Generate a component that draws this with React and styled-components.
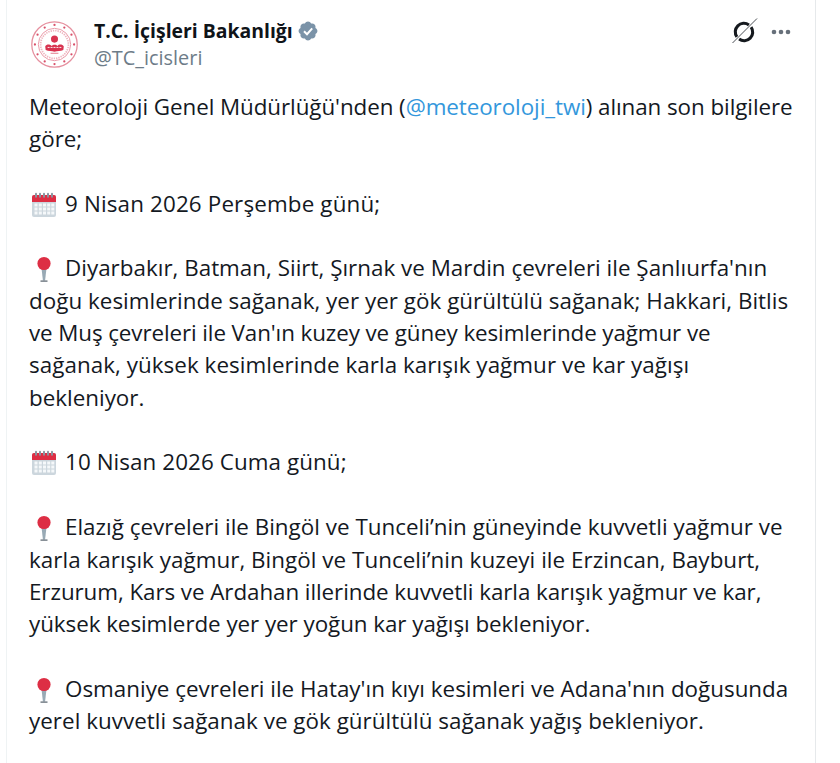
import React from 'react';
import styled, { createGlobalStyle } from 'styled-components';

const Global = createGlobalStyle`
  html, body { margin: 0; padding: 0; background: #fff; }
  body { font-family: "Open Sans", "Noto Sans", "Liberation Sans", sans-serif; color: #0f1419; }
`;

const Page = styled.div`
  width: 840px;
  height: 763px;
  overflow: hidden;
  background: #fff;
  padding-left: 6px;
  box-sizing: border-box;
`;

const Card = styled.article`
  width: 810px;
  height: 763px;
  box-sizing: border-box;
  border-left: 1px solid #eff3f4;
  border-right: 1px solid #e6e9eb;
  padding: 21px 0 0 24px;
`;

const Header = styled.header`
  display: flex;
  align-items: flex-start;
  height: 48px;
  padding-right: 24px;
`;

const Avatar = styled.svg`
  width: 47px;
  height: 47px;
  flex: none;
  margin-right: 16px;
`;

const Identity = styled.div`
  flex: 1;
  display: flex;
  flex-direction: column;
`;

const NameRow = styled.div`
  display: flex;
  align-items: center;
  gap: 4px;
  height: 20px;
`;

const Name = styled.span`
  font-size: 19.4px;
  font-weight: 700;
  line-height: 20px;
  white-space: nowrap;
`;

const Handle = styled.span`
  margin-top: 5px;
  font-size: 19.9px;
  line-height: 24px;
  color: #6d7c88;
  white-space: nowrap;
`;

const Actions = styled.div`
  display: flex;
  align-items: center;
  gap: 13px;
  height: 22px;
`;

const Body = styled.div`
  margin: 21.5px 0 0 -2px;
  font-size: 22.4px;
  line-height: 32.37px;
  color: #14191f;
`;

const Line = styled.div`
  height: 32.37px;
  white-space: nowrap;
  letter-spacing: ${(p) => p.$spacing ?? 0}px;
`;

const Mention = styled.span`
  color: #3397dc;
`;

const Emoji = styled.svg`
  width: 26px;
  height: 26px;
  vertical-align: -6px;
  margin: 0 8px 0 2px;
`;

const Verified = () => (
  <svg width="22" height="22" viewBox="0 0 22 22" aria-hidden="true">
    <path fill="#7b93a8" d="M20.4 11c0-1.3-.8-2.5-2-3 .4-1.2.1-2.6-.8-3.6-.9-.9-2.3-1.2-3.5-.8-.5-1.2-1.7-2-3.1-2s-2.5.8-3.1 2c-1.2-.4-2.6-.1-3.5.8-.9 1-1.2 2.4-.8 3.6-1.2.5-2 1.7-2 3s.8 2.5 2 3.1c-.4 1.2-.1 2.6.8 3.5.9.9 2.3 1.2 3.5.8.6 1.2 1.7 2 3.1 2s2.6-.8 3.1-2c1.2.4 2.6.1 3.5-.8.9-.9 1.2-2.3.8-3.5 1.2-.6 2-1.8 2-3.1z" />
    <path fill="none" stroke="#fff" strokeWidth="2" d="M7 11.2l3 3 5.2-5.8" />
  </svg>
);

const GrokMark = () => (
  <svg width="28" height="28" viewBox="0 0 28 28" aria-hidden="true">
    <path d="M18.9 6.9A8.6 8.6 0 0 0 6.9 18.9" fill="none" stroke="#15191e" strokeWidth="3.1" />
    <path d="M21.1 9.1A8.6 8.6 0 0 1 9.1 21.1" fill="none" stroke="#15191e" strokeWidth="3.1" />
    <path d="M2.5 25 L27 0.5" stroke="#4a4f55" strokeWidth="1" />
  </svg>
);

const MoreDots = () => (
  <svg width="20" height="6" viewBox="0 0 20 6" aria-hidden="true">
    <circle cx="3" cy="3" r="2.3" fill="#67707a" />
    <circle cx="10" cy="3" r="2.3" fill="#67707a" />
    <circle cx="17" cy="3" r="2.3" fill="#67707a" />
  </svg>
);

const Emblem = () => {
  const dots = Array.from({ length: 12 }, (_, i) => {
    const a = (i / 12) * Math.PI * 2;
    return [24 + 20 * Math.cos(a), 24 + 20 * Math.sin(a)];
  });
  return (
    <Avatar viewBox="0 0 48 48" aria-hidden="true">
      <circle cx="24" cy="24" r="23.2" fill="#fff" stroke="#e6909f" strokeWidth="1.3" />
      <circle cx="24" cy="24" r="16.5" fill="none" stroke="#e99aa8" strokeWidth="1" />
      <circle cx="24" cy="24" r="14.2" fill="none" stroke="#efb6c0" strokeWidth="1.8" strokeDasharray="1.4 1" />
      {dots.map(([x, y], i) => (
        <circle key={i} cx={x} cy={y} r="1.15" fill="#d9506a" />
      ))}
      <circle cx="24" cy="18.5" r="3.6" fill="#d8324f" />
      <path d="M14.5 26 C16 23 20 24 21 25.5 C22.5 23.8 26 23.8 27 25.5 C28.5 23.5 32 23.5 33.5 26 L33 29.5 C30 31 27 30 24 31.5 C21 30 18 31 15 29.5 Z" fill="#d8324f" />
      <path d="M17 27 h14" stroke="#fff" strokeWidth="0.9" strokeDasharray="2 1" />
      <path d="M20 33 h8" stroke="#e8909f" strokeWidth="1.2" />
    </Avatar>
  );
};

const Calendar = () => (
  <Emoji viewBox="0 0 26 26" aria-hidden="true">
    <rect x="1" y="3" width="24" height="22" rx="2" fill="#ccd6dd" />
    <path d="M1 10V5a2 2 0 0 1 2-2h20a2 2 0 0 1 2 2v5z" fill="#dd2e44" />
    {[4, 8, 12, 16, 20].map((x) => (
      <rect key={x} x={x} y="0.8" width="2" height="5" rx="1" fill="#8a95a0" />
    ))}
    {[11.5, 15.5, 19.5].map((y) =>
      [3.5, 7.8, 12, 16.2, 20.3].map((x) => (
        <rect key={`${x}-${y}`} x={x} y={y} width="3" height="3" fill="#f5f8fa" />
      ))
    )}
  </Emoji>
);

const Pin = () => (
  <Emoji viewBox="0 0 26 26" aria-hidden="true">
    <path d="M10.5 12h5l-1.4 12.5h-2.2z" fill="#99aab5" />
    <path d="M9.5 24.5h7v1.2h-7z" fill="#55606a" />
    <circle cx="13" cy="7.5" r="6.6" fill="#dd2e44" />
  </Emoji>
);

export default function App() {
  return (
    <>
      <Global />
      <Page>
        <Card>
          <Header>
            <Emblem />
            <Identity>
              <NameRow>
                <Name>T.C. İçişleri Bakanlığı</Name>
                <Verified />
              </NameRow>
              <Handle>@TC_icisleri</Handle>
            </Identity>
            <Actions>
              <GrokMark />
              <MoreDots />
            </Actions>
          </Header>
          <Body>
            <Line $spacing={-0.07}>Meteoroloji Genel Müdürlüğü'nden (<Mention>@meteoroloji_twi</Mention>) alınan son bilgilere</Line>
            <Line>göre;</Line>
            <Line />
            <Line $spacing={0.15}><Calendar />9 Nisan 2026 Perşembe günü;</Line>
            <Line />
            <Line $spacing={0.014}><Pin />Diyarbakır, Batman, Siirt, Şırnak ve Mardin çevreleri ile Şanlıurfa'nın</Line>
            <Line $spacing={0.027}>doğu kesimlerinde sağanak, yer yer gök gürültülü sağanak; Hakkari, Bitlis</Line>
            <Line $spacing={-0.1}>ve Muş çevreleri ile Van'ın kuzey ve güney kesimlerinde yağmur ve</Line>
            <Line $spacing={0.05}>sağanak, yüksek kesimlerinde karla karışık yağmur ve kar yağışı</Line>
            <Line>bekleniyor.</Line>
            <Line />
            <Line $spacing={0.08}><Calendar />10 Nisan 2026 Cuma günü;</Line>
            <Line />
            <Line $spacing={0.015}><Pin />Elazığ çevreleri ile Bingöl ve Tunceli’nin güneyinde kuvvetli yağmur ve</Line>
            <Line $spacing={0.04}>karla karışık yağmur, Bingöl ve Tunceli’nin kuzeyi ile Erzincan, Bayburt,</Line>
            <Line $spacing={-0.07}>Erzurum, Kars ve Ardahan illerinde kuvvetli karla karışık yağmur ve kar,</Line>
            <Line $spacing={-0.055}>yüksek kesimlerde yer yer yoğun kar yağışı bekleniyor.</Line>
            <Line />
            <Line><Pin />Osmaniye çevreleri ile Hatay'ın kıyı kesimleri ve Adana'nın doğusunda</Line>
            <Line $spacing={0.03}>yerel kuvvetli sağanak ve gök gürültülü sağanak yağış bekleniyor.</Line>
          </Body>
        </Card>
      </Page>
    </>
  );
}
